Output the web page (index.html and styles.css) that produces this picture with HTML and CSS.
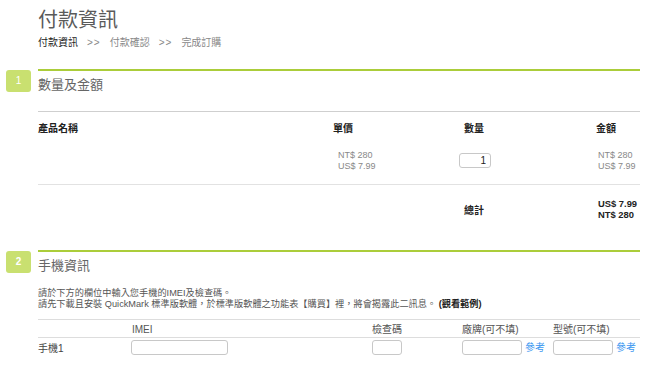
FILE: index.html
```html
<!DOCTYPE html>
<html lang="zh-Hant">
<head>
<meta charset="utf-8">
<title>付款資訊</title>
<link rel="stylesheet" href="styles.css">
</head>
<body>
<div class="page">
  <div class="header">
    <h1 class="title">付款資訊</h1>
    <div class="crumbs">
      <span class="crumb current">付款資訊</span>
      <span class="sep">&gt;&gt;</span>
      <span class="crumb">付款確認</span>
      <span class="sep">&gt;&gt;</span>
      <span class="crumb">完成訂購</span>
    </div>
  </div>

  <section class="section s1">
    <div class="badge">1</div>
    <div class="content">
      <h2 class="heading">數量及金額</h2>
      <div class="order">
        <div class="orow head">
          <div class="c c1">產品名稱</div>
          <div class="c c2">單價</div>
          <div class="c c3">數量</div>
          <div class="c c4">金額</div>
        </div>
        <div class="orow item">
          <div class="c c1"></div>
          <div class="c c2 price">NT$ 280<br>US$ 7.99</div>
          <div class="c c3 qtycell"><input class="qty" type="text" value="1"></div>
          <div class="c c4 price amt">NT$ 280<br>US$ 7.99</div>
        </div>
        <div class="orow total">
          <div class="c c1"></div>
          <div class="c c2"></div>
          <div class="c c3 totlabel">總計</div>
          <div class="c c4 totval">US$ 7.99<br>NT$ 280</div>
        </div>
      </div>
    </div>
  </section>

  <section class="section s2">
    <div class="badge bold">2</div>
    <div class="content">
      <h2 class="heading">手機資訊</h2>
      <p class="intro">請於下方的欄位中輸入您手機的IMEI及檢查碼。<br>請先下載且安裝 QuickMark 標準版軟體，於標準版軟體之功能表【購買】裡，將會揭露此二訊息。 <b class="example">(觀看範例)</b></p>
      <div class="phones">
        <div class="prow phead">
          <div></div>
          <div>IMEI</div>
          <div>檢查碼</div>
          <div>廠牌(可不填)</div>
          <div>型號(可不填)</div>
        </div>
        <div class="prow pdata">
          <div>手機1</div>
          <div><input class="field imei" type="text"></div>
          <div><input class="field chk" type="text"></div>
          <div class="withlink"><input class="field brand" type="text"><a class="ref" href="#">參考</a></div>
          <div class="withlink"><input class="field model" type="text"><a class="ref" href="#">參考</a></div>
        </div>
      </div>
    </div>
  </section>
</div>
</body>
</html>
```

FILE: styles.css
```css
html, body {
  margin: 0;
  padding: 0;
  background: #fff;
}
body {
  font-family: "Liberation Sans", "Noto Sans CJK TC", sans-serif;
  font-size: 10px;
  color: #333;
}
.page {
  padding: 8px 9px 0 0;
}
.header {
  padding-left: 38px;
}
.title {
  margin: 0;
  font-size: 20px;
  line-height: 24px;
  font-weight: normal;
  color: #5a5a5a;
}
.crumbs {
  margin-top: 5px;
  line-height: 12px;
  font-size: 10px;
  color: #888;
  display: flex;
}
.crumb.current {
  color: #222;
}
.sep {
  margin: 0 9px 0 9px;
  letter-spacing: 1px;
}
.section {
  display: flex;
  padding-left: 6px;
  gap: 7px;
}
.s1 {
  margin-top: 20px;
}
.s2 {
  margin-top: 30px;
}
.badge {
  width: 25px;
  height: 22px;
  margin-top: 1px;
  flex: none;
  background: #c9e070;
  border-radius: 3px;
  color: #fff;
  font-size: 10px;
  line-height: 22px;
  text-align: center;
}
.badge.bold {
  font-weight: bold;
}
.content {
  flex: 1;
  border-top: 2px solid #abcd3a;
}
.heading {
  margin: 6px 0 0;
  font-size: 13px;
  line-height: 16px;
  font-weight: normal;
  color: #666;
}
.order {
  margin-top: 18px;
  border-top: 1px solid #cfcfcf;
}
.orow {
  display: grid;
  grid-template-columns: 295px 126px 137px 1fr;
}
.orow.head {
  padding-top: 11px;
  line-height: 12px;
  font-weight: bold;
  color: #222;
}
.orow.head .c3 {
  padding-left: 5px;
}
.orow.item {
  padding-top: 15px;
  padding-bottom: 12px;
  border-bottom: 1px solid #e2e2e2;
}
.price {
  font-size: 9px;
  line-height: 11px;
  color: #888;
  padding-left: 5px;
}
.price.amt {
  padding-left: 2px;
}
.qty {
  box-sizing: border-box;
  width: 32px;
  height: 15px;
  margin: 3px 0 0;
  padding: 0 4px;
  border: 1px solid #c8c8c8;
  border-radius: 3px;
  font-family: "Liberation Sans", sans-serif;
  font-size: 10px;
  text-align: right;
  color: #222;
  outline: none;
}
.orow.total {
  padding-top: 13px;
  align-items: center;
}
.totlabel {
  padding-left: 5px;
  font-weight: bold;
  color: #222;
}
.totval {
  padding-left: 2px;
  font-size: 9.4px;
  line-height: 11px;
  font-weight: bold;
  color: #222;
}
.intro {
  margin: 14px 0 0;
  font-size: 9.2px;
  line-height: 11px;
  color: #555;
}
.example {
  color: #222;
}
.phones {
  margin-top: 9px;
  border-top: 1px solid #ddd;
}
.prow {
  display: grid;
  grid-template-columns: 94px 240px 90px 91px 1fr;
  align-items: center;
}
.prow.phead {
  padding: 4px 0 1px;
  line-height: 12px;
  color: #555;
  border-bottom: 1px solid #ddd;
}
.prow.pdata {
  padding-top: 2px;
  color: #444;
}
.field {
  box-sizing: border-box;
  height: 15px;
  margin: 0;
  padding: 0 3px;
  border: 1px solid #c8c8c8;
  border-radius: 3px;
  font-size: 10px;
  outline: none;
  vertical-align: middle;
}
.imei {
  width: 97px;
  margin-left: -1px;
}
.chk {
  width: 30px;
}
.brand, .model {
  width: 60px;
}
.withlink {
  display: flex;
  align-items: center;
}
.ref {
  margin-left: 3px;
  color: #3a96f0;
  text-decoration: none;
  line-height: 12px;
}
```
